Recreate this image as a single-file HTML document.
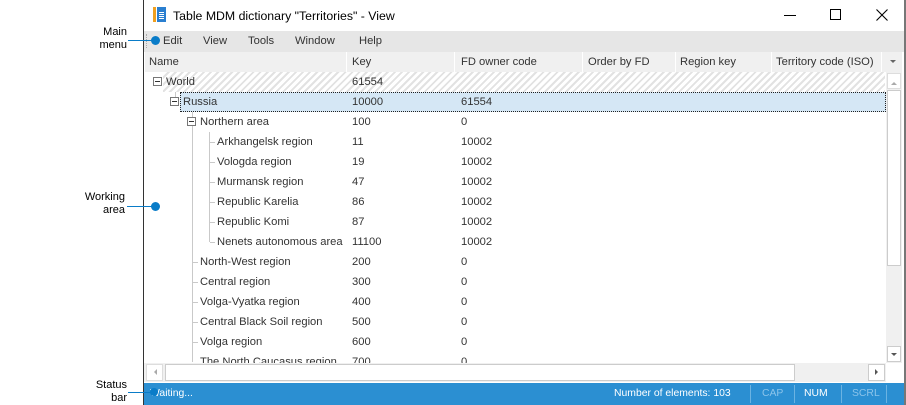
<!DOCTYPE html>
<html><head><style>
*{margin:0;padding:0;box-sizing:border-box}
body{width:906px;height:405px;background:#fff;position:relative;overflow:hidden;font-family:"Liberation Sans",sans-serif;font-size:11.2px;color:#333}
.a{position:absolute;white-space:nowrap}
.lbl{position:absolute;font-size:11px;color:#000;text-align:right;line-height:13px}
.cell{position:absolute;color:#333;line-height:20px}
.hl{position:absolute;background:#c9c9c9}
.exp{position:absolute;width:9px;height:9px;border:1px solid #777;background:#fff}
.exp:after{content:"";position:absolute;left:1px;top:3px;width:5px;height:1px;background:#333}
.hdr{position:absolute;top:52px;height:20px;line-height:20px;color:#333;border-right:1px solid #fff;padding-left:6px}
</style></head><body>
<div class="a" style="left:143px;top:0;width:1px;height:405px;background:#333"></div>
<div class="a" style="left:904px;top:0;width:2px;height:405px;background:#777"></div>
<div class="a" style="left:153px;top:7px;width:3px;height:15px;background:#f0a020"></div>
<div class="a" style="left:157px;top:7px;width:9px;height:15px;background:#2a7fd0"></div>
<div class="a" style="left:159px;top:12px;width:5px;height:8px;background:repeating-linear-gradient(#fff 0 1px,transparent 1px 2px)"></div>
<div class="a" style="left:173px;top:8px;font-size:12.3px;color:#000;line-height:16px">Table MDM dictionary "Territories" - View</div>
<div class="a" style="left:784px;top:15px;width:12px;height:1px;background:#000"></div>
<div class="a" style="left:830px;top:9px;width:11px;height:11px;border:1px solid #000"></div>
<svg class="a" style="left:876px;top:9px" width="12" height="12"><path d="M0.5 0.5L11.5 11.5M11.5 0.5L0.5 11.5" stroke="#000" stroke-width="1.1"/></svg>
<div class="a" style="left:144px;top:31px;width:760px;height:21px;background:#e6e6e6"></div>
<div class="a" style="left:146px;top:34px;width:1px;height:14px;border-left:1px dotted #aaa"></div>
<div class="a" style="left:163px;top:35px;color:#333">Edit</div>
<div class="a" style="left:203px;top:35px">View</div>
<div class="a" style="left:248px;top:35px">Tools</div>
<div class="a" style="left:295px;top:35px">Window</div>
<div class="a" style="left:359px;top:35px">Help</div>
<div class="a" style="left:145px;top:52px;width:757px;height:20px;background:#f0f0f0"></div>
<div class="hdr" style="left:143px;width:204px">Name</div>
<div class="hdr" style="left:346px;width:109px">Key</div>
<div class="hdr" style="left:455px;width:128px">FD owner code</div>
<div class="hdr" style="left:582px;width:94px">Order by FD</div>
<div class="hdr" style="left:674px;width:98px">Region key</div>
<div class="hdr" style="left:770px;width:112px">Territory code (ISO)</div>
<div class="a" style="left:890px;top:60px;border:3px solid transparent;border-top:3px solid #666"></div>
<div class="a" style="left:163px;top:72px;width:722px;height:20px;background:repeating-linear-gradient(135deg,#fff 0 3px,#e2e2e2 3px 5px)"></div>
<div class="a" style="left:180px;top:92px;width:706px;height:20px;background:#d5e7f5;border:1px dotted #222"></div>
<div class="hl" style="left:175px;top:92px;width:1px;height:10px"></div>
<div class="hl" style="left:192px;top:112px;width:1px;height:250px"></div>
<div class="hl" style="left:209px;top:132px;width:1px;height:110px"></div>
<div class="hl" style="left:210px;top:142px;width:5px;height:1px"></div>
<div class="hl" style="left:210px;top:162px;width:5px;height:1px"></div>
<div class="hl" style="left:210px;top:182px;width:5px;height:1px"></div>
<div class="hl" style="left:210px;top:202px;width:5px;height:1px"></div>
<div class="hl" style="left:210px;top:222px;width:5px;height:1px"></div>
<div class="hl" style="left:210px;top:242px;width:5px;height:1px"></div>
<div class="hl" style="left:193px;top:262px;width:5px;height:1px"></div>
<div class="hl" style="left:193px;top:282px;width:5px;height:1px"></div>
<div class="hl" style="left:193px;top:302px;width:5px;height:1px"></div>
<div class="hl" style="left:193px;top:322px;width:5px;height:1px"></div>
<div class="hl" style="left:193px;top:342px;width:5px;height:1px"></div>
<div class="exp" style="left:153px;top:77px"></div>
<div class="exp" style="left:170px;top:97px"></div>
<div class="exp" style="left:187px;top:117px"></div>
<div class="cell" style="left:166px;top:72px">World</div><div class="cell" style="left:352px;top:72px">61554</div>
<div class="cell" style="left:183px;top:92px">Russia</div><div class="cell" style="left:352px;top:92px">10000</div><div class="cell" style="left:461px;top:92px">61554</div>
<div class="cell" style="left:200px;top:112px">Northern area</div><div class="cell" style="left:352px;top:112px">100</div><div class="cell" style="left:461px;top:112px">0</div>
<div class="cell" style="left:217px;top:132px">Arkhangelsk region</div><div class="cell" style="left:352px;top:132px">11</div><div class="cell" style="left:461px;top:132px">10002</div>
<div class="cell" style="left:217px;top:152px">Vologda region</div><div class="cell" style="left:352px;top:152px">19</div><div class="cell" style="left:461px;top:152px">10002</div>
<div class="cell" style="left:217px;top:172px">Murmansk region</div><div class="cell" style="left:352px;top:172px">47</div><div class="cell" style="left:461px;top:172px">10002</div>
<div class="cell" style="left:217px;top:192px">Republic Karelia</div><div class="cell" style="left:352px;top:192px">86</div><div class="cell" style="left:461px;top:192px">10002</div>
<div class="cell" style="left:217px;top:212px">Republic Komi</div><div class="cell" style="left:352px;top:212px">87</div><div class="cell" style="left:461px;top:212px">10002</div>
<div class="cell" style="left:217px;top:232px">Nenets autonomous area</div><div class="cell" style="left:352px;top:232px">11100</div><div class="cell" style="left:461px;top:232px">10002</div>
<div class="cell" style="left:200px;top:252px">North-West region</div><div class="cell" style="left:352px;top:252px">200</div><div class="cell" style="left:461px;top:252px">0</div>
<div class="cell" style="left:200px;top:272px">Central region</div><div class="cell" style="left:352px;top:272px">300</div><div class="cell" style="left:461px;top:272px">0</div>
<div class="cell" style="left:200px;top:292px">Volga-Vyatka region</div><div class="cell" style="left:352px;top:292px">400</div><div class="cell" style="left:461px;top:292px">0</div>
<div class="cell" style="left:200px;top:312px">Central Black Soil region</div><div class="cell" style="left:352px;top:312px">500</div><div class="cell" style="left:461px;top:312px">0</div>
<div class="cell" style="left:200px;top:332px">Volga region</div><div class="cell" style="left:352px;top:332px">600</div><div class="cell" style="left:461px;top:332px">0</div>
<div class="a" style="left:144px;top:352px;width:742px;height:11px;overflow:hidden"><div class="cell" style="left:56px;top:0">The North Caucasus region</div><div class="cell" style="left:208px;top:0">700</div><div class="cell" style="left:317px;top:0">0</div></div>
<div class="a" style="left:886px;top:72px;width:16px;height:291px;background:#f0f0f0"></div>
<div class="a" style="left:887px;top:73px;width:14px;height:16px;background:#fff;border:1px solid #ddd"></div>
<div class="a" style="left:891px;top:79px;border:3px solid transparent;border-bottom:3px solid #aaa"></div>
<div class="a" style="left:887px;top:90px;width:14px;height:176px;background:#fff;border:1px solid #ccc"></div>
<div class="a" style="left:887px;top:346px;width:14px;height:16px;background:#fff;border:1px solid #ccc"></div>
<div class="a" style="left:891px;top:353px;border:3px solid transparent;border-top:3px solid #555"></div>
<div class="a" style="left:144px;top:363px;width:742px;height:19px;background:#f0f0f0"></div>
<div class="a" style="left:146px;top:364px;width:17px;height:17px;background:#fff;border:1px solid #ddd"></div>
<div class="a" style="left:151px;top:369px;border:3px solid transparent;border-right:3px solid #aaa"></div>
<div class="a" style="left:165px;top:364px;width:630px;height:17px;background:#fff;border:1px solid #ccc"></div>
<div class="a" style="left:868px;top:364px;width:17px;height:17px;background:#fff;border:1px solid #ccc"></div>
<div class="a" style="left:875px;top:369px;border:3px solid transparent;border-left:3px solid #555"></div>
<div class="a" style="left:144px;top:383px;width:760px;height:22px;background:#2b8fd2"></div>
<div class="a" style="left:150px;top:387px;color:#fff;line-height:14px;font-size:10.4px">Waiting...</div>
<div class="a" style="left:614px;top:387px;color:#fff;line-height:14px;font-size:10.4px">Number of elements: 103</div>
<div class="a" style="left:750px;top:385px;width:1px;height:18px;background:#6bb3e2"></div>
<div class="a" style="left:762px;top:387px;color:#8cc4ea;line-height:14px;font-size:10.4px">CAP</div>
<div class="a" style="left:794px;top:385px;width:1px;height:18px;background:#6bb3e2"></div>
<div class="a" style="left:804px;top:387px;color:#fff;line-height:14px;font-size:10.4px">NUM</div>
<div class="a" style="left:841px;top:385px;width:1px;height:18px;background:#6bb3e2"></div>
<div class="a" style="left:852px;top:387px;color:#8cc4ea;line-height:14px;font-size:10.4px">SCRL</div>
<div class="a" style="left:886px;top:385px;width:1px;height:18px;background:#6bb3e2"></div>
<div class="lbl" style="left:60px;top:26px;width:67px">Main<br>menu</div>
<div class="a" style="left:128px;top:40px;width:27px;height:1px;background:#0a7cc8"></div>
<div class="a" style="left:151px;top:36px;width:9px;height:9px;border-radius:50%;background:#0a7cc8"></div>
<div class="lbl" style="left:50px;top:191px;width:75px">Working<br>area</div>
<div class="a" style="left:127px;top:206px;width:28px;height:1px;background:#0a7cc8"></div>
<div class="a" style="left:151px;top:202px;width:9px;height:9px;border-radius:50%;background:#0a7cc8"></div>
<div class="lbl" style="left:60px;top:379px;width:67px">Status<br>bar</div>
<div class="a" style="left:128px;top:392px;width:25px;height:1px;background:#0a7cc8"></div>
<div class="a" style="left:150px;top:388px;width:8px;height:8px;border-radius:50%;background:#0a7cc8"></div>
</body></html>
